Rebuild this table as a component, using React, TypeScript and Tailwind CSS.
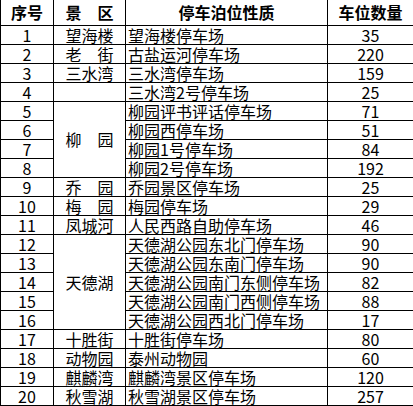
const rows: { n: number; name?: string; span?: number; line?: boolean; lot: string; count: number }[] = [
  { n: 1, name: '望海楼', line: true, lot: '望海楼停车场', count: 35 },
  { n: 2, name: '老　街', lot: '古盐运河停车场', count: 220 },
  { n: 3, name: '三水湾', line: true, lot: '三水湾停车场', count: 159 },
  { n: 4, name: '', lot: '三水湾2号停车场', count: 25 },
  { n: 5, name: '柳　园', span: 4, lot: '柳园评书评话停车场', count: 71 },
  { n: 6, lot: '柳园西停车场', count: 51 },
  { n: 7, lot: '柳园1号停车场', count: 84 },
  { n: 8, lot: '柳园2号停车场', count: 192 },
  { n: 9, name: '乔　园', lot: '乔园景区停车场', count: 25 },
  { n: 10, name: '梅　园', lot: '梅园停车场', count: 29 },
  { n: 11, name: '凤城河', line: true, lot: '人民西路自助停车场', count: 46 },
  { n: 12, name: '天德湖', span: 5, lot: '天德湖公园东北门停车场', count: 90 },
  { n: 13, lot: '天德湖公园东南门停车场', count: 90 },
  { n: 14, lot: '天德湖公园南门东侧停车场', count: 82 },
  { n: 15, lot: '天德湖公园南门西侧停车场', count: 88 },
  { n: 16, lot: '天德湖公园西北门停车场', count: 17 },
  { n: 17, name: '十胜街', line: true, lot: '十胜街停车场', count: 80 },
  { n: 18, name: '动物园', line: true, lot: '泰州动物园', count: 60 },
  { n: 19, name: '麒麟湾', line: true, lot: '麒麟湾景区停车场', count: 120 },
  { n: 20, name: '秋雪湖', line: true, lot: '秋雪湖景区停车场', count: 257 },
];

export default function App() {
  const cell = 'border border-black p-0 leading-[18px]';
  return (
    <div className="w-[413px] h-[406px] bg-white text-black overflow-hidden" style={{ fontFamily: '"Noto Sans CJK SC", sans-serif' }}>
      <table className="table-fixed border-collapse w-[413px] text-[16px]">
        <colgroup>
          <col className="w-[53px]" />
          <col className="w-[72px]" />
          <col className="w-[202px]" />
          <col className="w-[86px]" />
        </colgroup>
        <thead>
          <tr className="h-[25px]">
            <th className={`${cell} border-t-0 font-bold`}>序号</th>
            <th className={`${cell} border-t-0 font-bold`}>景　区</th>
            <th className={`${cell} border-t-0 font-bold`}>停车泊位性质</th>
            <th className={`${cell} border-t-0 font-bold`}>车位数量</th>
          </tr>
        </thead>
        <tbody>
          {rows.map((r) => (
            <tr key={r.n} className="h-[19px]">
              <td className={`${cell} text-center`}>{r.n}</td>
              {r.name !== undefined && (
                <td rowSpan={r.span} className={`${cell} text-center whitespace-nowrap`}>
                  <span className={r.line ? 'underline underline-offset-2' : ''}>{r.name}</span>
                </td>
              )}
              <td className={`${cell} pl-[2px] whitespace-nowrap`}>
                <span className="underline underline-offset-2">{r.lot}</span>
              </td>
              <td className={`${cell} text-center`}>{r.count}</td>
            </tr>
          ))}
        </tbody>
      </table>
    </div>
  );
}
